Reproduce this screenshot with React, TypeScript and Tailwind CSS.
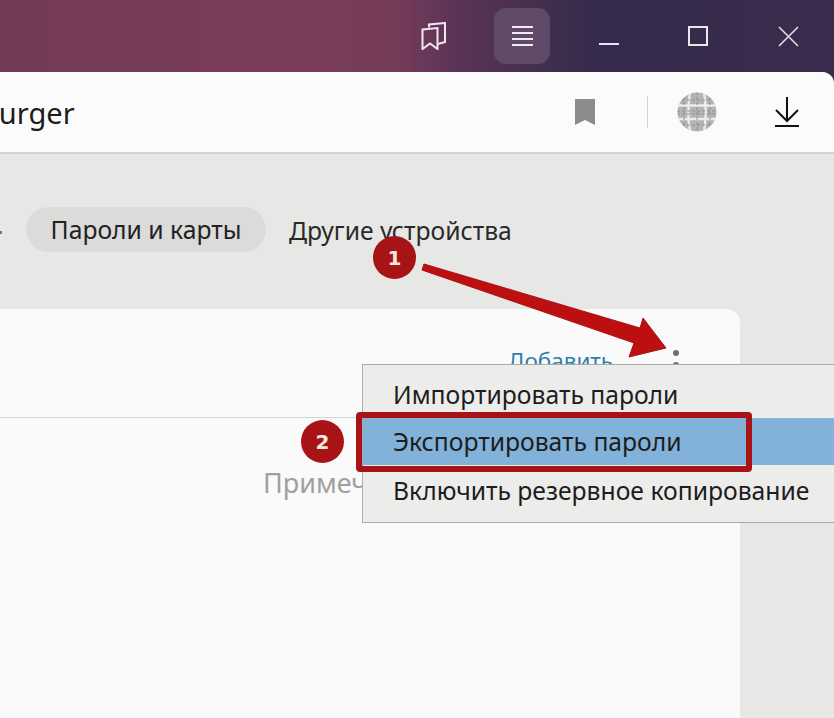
const font = "font-['Noto_Sans','Open_Sans',sans-serif]"

function Globe() {
    return (
        <svg width="40" height="40" viewBox="0 0 40 40">
            <defs>
                <clipPath id="globe">
                    <circle cx="20" cy="20" r="19.5" />
                </clipPath>
            </defs>
            <circle cx="20" cy="20" r="19.5" fill="#b4b4b4" />
            <g clipPath="url(#globe)" fill="none">
                <path d="M0 13.500h40M0 27h40M13 0c-2 12-2 28 0 40M27 0c2 12 2 28 0 40" stroke="#ececec" strokeWidth="2.400" />
                <path d="M0 8h40M0 19h40M0 22h40M0 33h40M20 0v40M7 0v40M33 0v40" stroke="#8f8f8f" strokeWidth="1" strokeDasharray="3 2" />
            </g>
        </svg>
    )
}

function TitleBar() {
    return (
        <div className="h-[72px] shrink-0 bg-[linear-gradient(90deg,#733a57_0%,#7a3d5a_36%,#743b59_48%,#5a3356_55%,#44304f_64%,#352a4c_72%,#3a2c4c_100%)] flex justify-end items-start">
            {/* Bookmarks */}
            <div className="w-[60px] h-[72px] flex items-center justify-center mr-[30px] pb-[1px]">
                <svg width="26" height="28" viewBox="0 0 26 28" fill="none" stroke="#f3e6ee" strokeWidth="2">
                    <path d="M1.500 7.500l15-1.500v21l-7.500-5.500L1.500 27z" />
                    <path d="M8 5.500V2.500L24 1v19l-7 2" />
                </svg>
            </div>
            {/* Menu */}
            <div className="w-[56px] h-[56px] mt-2 rounded-xl bg-[#5f4a68] flex flex-col items-center justify-center gap-[4px] mr-[31px]">
                <div className="w-[21px] h-[2px] bg-[#f3e9f0]" />
                <div className="w-[21px] h-[2px] bg-[#f3e9f0]" />
                <div className="w-[21px] h-[2px] bg-[#f3e9f0]" />
                <div className="w-[21px] h-[2px] bg-[#f3e9f0]" />
            </div>
            <div className="w-[56px] h-[72px] flex justify-center pt-[43px] mr-[33px]">
                <div className="w-5 h-[2px] bg-[#e9e5ec]" />
            </div>
            <div className="w-[56px] h-[72px] flex justify-center pt-[26px] mr-[16px]">
                <div className="w-5 h-5 border-2 border-[#e9e5ec]" />
            </div>
            <div className="w-[92px] h-[72px] flex justify-center pt-[26px]">
                <svg width="21" height="21" viewBox="0 0 21 21" stroke="#e3dfe6" strokeWidth="1.600">
                    <path d="M1 1l19 19M20 1L1 20" />
                </svg>
            </div>
        </div>
    )
}

function AddressBar() {
    return (
        <div className="h-[82px] shrink-0 bg-[#fbfbfb] rounded-tr-[12px] border-b-2 border-[#d3d3d3] flex items-center justify-between">
            <span className={`${font} text-[29px] text-[#1c1c1c] ml-[-19px] mt-[2px]`}>burger</span>
            <div className="flex items-center">
                <svg width="20" height="26" viewBox="0 0 20 26" className="mr-[52px]">
                    <path d="M0 0h20v26l-10-5-10 5z" fill="#8c8c8c" />
                </svg>
                <div className="w-px h-[32px] bg-[#d4d4d4] mr-[29px]" />
                <Globe />
                <svg width="26" height="30" viewBox="0 0 26 30" className="ml-[57px] mr-[34px]" fill="none" stroke="#111" strokeWidth="2">
                    <path d="M13 0v24M2 13l11 11 11-11M1 29h24" />
                </svg>
            </div>
        </div>
    )
}

function Tabs() {
    return (
        <div className="h-[155px] shrink-0 flex items-start pt-[53px] pl-[26px]">
            <div className="w-[2px] h-[3px] bg-[#4a86a8] mt-[24px] ml-[-26px] mr-[24px]" />
            <div className={`${font} h-[45px] w-[240px] rounded-full bg-[#dbdbda] flex items-center justify-center text-[24.7px] text-[#222] pt-[1px]`}>
                Пароли и карты
            </div>
            <span className={`${font} ml-[23px] h-[46px] flex items-center text-[24.7px] text-[#2a2a2a] pt-[1px]`}>
                Другие устройства
            </span>
        </div>
    )
}

function Card() {
    return (
        <div className="flex-1 bg-[#fafafa] w-[740px] rounded-tr-[14px]">
            <div className="h-[109px] border-b border-[#d6d6d6] relative">
                <span className={`${font} absolute left-[508px] top-[41px] text-[22.5px] leading-none text-[#2f7fa8]`}>Добавить</span>
                <div className="absolute left-[673px] top-[41px] w-[6px] h-[6px] rounded-full bg-[#6e6e6e]" />
                <div className="absolute left-[673px] top-[53px] w-[6px] h-[6px] rounded-full bg-[#6e6e6e]" />
            </div>
            <div className={`${font} pl-[263px] pt-[51px] text-[27px] leading-none text-[#a0a0a0]`}>Примечания</div>
        </div>
    )
}

function Menu() {
    return (
        <div className={`${font} absolute left-[362px] top-[364px] w-[472px] h-[159px] bg-[#ececeb] border border-[#ababab] border-r-0 text-[24.7px] text-[#1d1d1d]`}>
            <div className="h-[53px] flex items-center pl-[30px] pt-[7px]">Импортировать пароли</div>
            <div className="h-[47px] bg-[#82b2d9] flex items-center pl-[30px] pt-[1px]">Экспортировать пароли</div>
            <div className="h-[57px] flex items-center pl-[30px] pb-[6px]">Включить резервное копирование</div>
        </div>
    )
}

function Badge({ n, className }: { n: string; className: string }) {
    return (
        <div className={`absolute w-[43px] h-[43px] rounded-full bg-[#a81315] text-[#f4e6e0] flex items-center justify-center font-['DejaVu_Sans',sans-serif] font-bold text-[20px] ${className}`}>
            {n}
        </div>
    )
}

export default function App() {
    return (
        <div className="relative w-[834px] h-[718px] overflow-hidden bg-[#3a2c4c]">
            <div className="h-full flex flex-col">
                <TitleBar />
                <div className="flex-1 flex flex-col bg-[#e7e7e6] rounded-tr-[12px]">
                    <AddressBar />
                    <Tabs />
                    <Card />
                </div>
            </div>
            <Menu />
            {/* Red frame around the export row */}
            <div className="absolute left-[356px] top-[412px] w-[396px] h-[60px] border-[6px] border-[#a81317] rounded-[4px]" />
            {/* Arrow */}
            <svg className="absolute left-0 top-0 pointer-events-none" width="834" height="718">
                <path d="M424 264 L640 328 L643 318 L666 348 L629 357 L634 343 L422 270 Z" fill="#bd0f10" stroke="#a81315" strokeWidth="1" strokeLinejoin="round" />
            </svg>
            <Badge n="1" className="left-[373px] top-[236px]" />
            <Badge n="2" className="left-[301px] top-[420px]" />
        </div>
    )
}
